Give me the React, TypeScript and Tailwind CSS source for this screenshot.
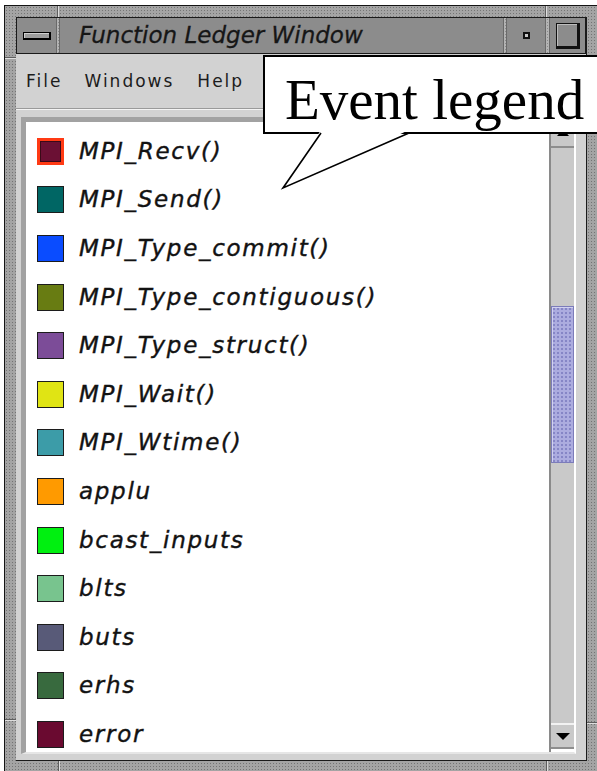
import React from "react";

type Entry = { name: string; swatch: string; selected?: boolean };

const entries: Entry[] = [
  { name: "MPI_Recv()", swatch: "bg-[#6b1034]", selected: true },
  { name: "MPI_Send()", swatch: "bg-[#006664]" },
  { name: "MPI_Type_commit()", swatch: "bg-[#0a4cff]" },
  { name: "MPI_Type_contiguous()", swatch: "bg-[#687c12]" },
  { name: "MPI_Type_struct()", swatch: "bg-[#7c4c98]" },
  { name: "MPI_Wait()", swatch: "bg-[#e0e414]" },
  { name: "MPI_Wtime()", swatch: "bg-[#3c9ca8]" },
  { name: "applu", swatch: "bg-[#ff9a00]" },
  { name: "bcast_inputs", swatch: "bg-[#00f010]" },
  { name: "blts", swatch: "bg-[#78c48e]" },
  { name: "buts", swatch: "bg-[#585a78]" },
  { name: "erhs", swatch: "bg-[#386a3e]" },
  { name: "error", swatch: "bg-[#6a0a30]" },
];

const texture =
  "bg-[#a4a4a4] bg-[radial-gradient(circle,#747474_0.7px,transparent_0.9px)] bg-[length:3px_3px]";

function TitleDivider({ w }: { w: string }) {
  return (
    <div
      className={`${w} h-full shrink-0 border-x border-[#6a6a6a] bg-[#b4b4b4] bg-[radial-gradient(circle,#8a8a8a_0.7px,transparent_0.9px)] bg-[length:3px_3px]`}
    />
  );
}

function TitleBar() {
  return (
    <div className="flex h-[37px] shrink-0 border border-[#1a1a1a] bg-[#8c8c8c]">
      {/* window menu button */}
      <div className="flex w-[39px] shrink-0 items-center justify-center">
        <div className="h-[8px] w-[28px] border border-black border-b-2 border-r-2 bg-[#9c9c9c] shadow-[inset_1px_1px_0_#cfcfcf]" />
      </div>
      <TitleDivider w="w-[4px]" />
      <div className="flex min-w-0 flex-1 items-center pl-[19px]">
        <span className="whitespace-nowrap font-['DejaVu_Sans',sans-serif] text-[23px] italic leading-none text-[#161616] [-webkit-text-stroke:0.3px_#161616]">
          Function Ledger Window
        </span>
      </div>
      <TitleDivider w="w-[4px]" />
      {/* minimize */}
      <div className="flex w-[38px] shrink-0 items-center justify-center">
        <div className="h-[7px] w-[7px] border-2 border-[#111] bg-[#c8c8c8]" />
      </div>
      <TitleDivider w="w-[5px]" />
      {/* maximize */}
      <div className="flex w-[35px] shrink-0 items-center justify-center">
        <div className="h-[26px] w-[24px] border border-[#111] border-b-[3px] border-r-[3px] bg-[#8c8c8c] shadow-[inset_1px_1px_0_#bdbdbd]" />
      </div>
    </div>
  );
}

function MenuBar() {
  return (
    <div className="flex h-[54px] shrink-0 items-center pl-[10px] pt-[2px] font-['DejaVu_Sans',sans-serif] text-[17px] tracking-[2px] text-[#1c1c1c]">
      <span>File</span>
      <span className="ml-[22px]">Windows</span>
      <span className="ml-[23px]">Help</span>
    </div>
  );
}

function Swatch({ entry }: { entry: Entry }) {
  if (entry.selected) {
    return (
      <div className="flex h-[27px] w-[27px] shrink-0 items-center justify-center bg-[#ff3a14]">
        <div className={`h-[21px] w-[21px] border border-[#3a0a18] ${entry.swatch}`} />
      </div>
    );
  }
  return <div className={`h-[27px] w-[27px] shrink-0 border border-[#1c1c1c] ${entry.swatch}`} />;
}

function ScrollBar() {
  return (
    <div className="flex w-[25px] shrink-0 flex-col border-l-2 border-[#8a8a8a] bg-[#c9c9c9]">
      <div className="flex h-[26px] shrink-0 items-end justify-center border-b-2 border-[#8e8e8e] pb-[10px]">
        <div className="h-0 w-0 border-x-[6px] border-b-[7px] border-x-transparent border-b-black" />
      </div>
      <div className="h-[158px] shrink-0" />
      <div className="h-[157px] shrink-0 border border-[#7c7cba] bg-[#acacdf] bg-[radial-gradient(circle,#8686c6_0.8px,transparent_1px)] bg-[length:4px_4px] shadow-[inset_1px_1px_0_#d2d2f0]" />
      <div className="flex-1" />
      <div className="flex h-[26px] shrink-0 items-start justify-center border-b-2 border-t-2 border-b-[#8e8e8e] border-t-[#f2f2f2] pt-[8px]">
        <div className="h-0 w-0 border-x-[7px] border-t-[7px] border-x-transparent border-t-black" />
      </div>
      <div className="h-[3px] shrink-0 bg-white" />
    </div>
  );
}

function Legend() {
  return (
    <div className="ml-[5px] mr-[10px] mt-[7px] flex h-[637px] shrink-0 border-b-2 border-l-[5px] border-r-2 border-t-[5px] border-b-[#e6e6e6] border-l-[#a2a2a2] border-r-white border-t-[#a2a2a2]">
      <div className="flex flex-1 flex-col overflow-hidden bg-white pl-[11px] pt-[5px]">
        {entries.map((e) => (
          <div key={e.name} className="flex h-[48.6px] shrink-0 items-center">
            <Swatch entry={e} />
            <span className="ml-[15px] whitespace-nowrap font-['DejaVu_Sans',sans-serif] text-[23px] italic leading-none tracking-[1.7px] text-[#121212] [-webkit-text-stroke:0.4px_#121212]">
              {e.name}
            </span>
          </div>
        ))}
      </div>
      <ScrollBar />
    </div>
  );
}

export default function App() {
  return (
    <div className="relative h-[771px] w-[597px] overflow-hidden bg-white">
      <div className={`relative ml-[4px] mt-[5px] h-[768px] w-[595px] border border-[#141414] p-[11px] ${texture}`}>
        {/* resize-corner notches on the frame */}
        <div className="absolute left-[52px] top-0 h-[11px] w-[2px] border-l border-r border-l-[#5e5e5e] border-r-[#dedede]" />
        <div className="absolute left-[540px] top-0 h-[11px] w-[2px] border-l border-r border-l-[#5e5e5e] border-r-[#dedede]" />
        <div className="absolute left-0 top-[51px] h-[2px] w-[11px] border-b border-t border-b-[#dedede] border-t-[#5e5e5e]" />
        <div className="absolute left-0 top-[713px] h-[2px] w-[11px] border-b border-t border-b-[#dedede] border-t-[#5e5e5e]" />
        <div className="absolute right-0 top-[716px] h-[2px] w-[11px] border-b border-t border-b-[#dedede] border-t-[#5e5e5e]" />
        <div className="absolute bottom-0 left-[53px] h-[11px] w-[2px] border-l border-r border-l-[#5e5e5e] border-r-[#dedede]" />
        <div className="absolute bottom-0 left-[541px] h-[11px] w-[2px] border-l border-r border-l-[#5e5e5e] border-r-[#dedede]" />

        <div className="flex h-full flex-col border-b border-r border-[#1a1a1a]">
          <TitleBar />
          <div className="flex flex-1 flex-col bg-[#d2d2d2]">
            <MenuBar />
            <div className="h-[2px] shrink-0 border-b border-t border-b-[#f4f4f4] border-t-[#9a9a9a]" />
            <Legend />
          </div>
        </div>
      </div>

      {/* callout bubble */}
      <div className="absolute left-[263px] top-[55px] h-[79px] w-[340px] border-2 border-black bg-white pl-[20px] pt-[14px]">
        <span className="whitespace-nowrap font-['Liberation_Serif',serif] text-[57px] leading-none text-black">Event legend</span>
      </div>
      <svg className="absolute left-[280px] top-[130px]" width="132" height="62" viewBox="0 0 132 62">
        <polygon points="41,0 3,58 129,0" fill="white" />
        <polyline points="41,3 3,58 129,3" fill="none" stroke="black" strokeWidth="1.6" />
      </svg>
    </div>
  );
}
